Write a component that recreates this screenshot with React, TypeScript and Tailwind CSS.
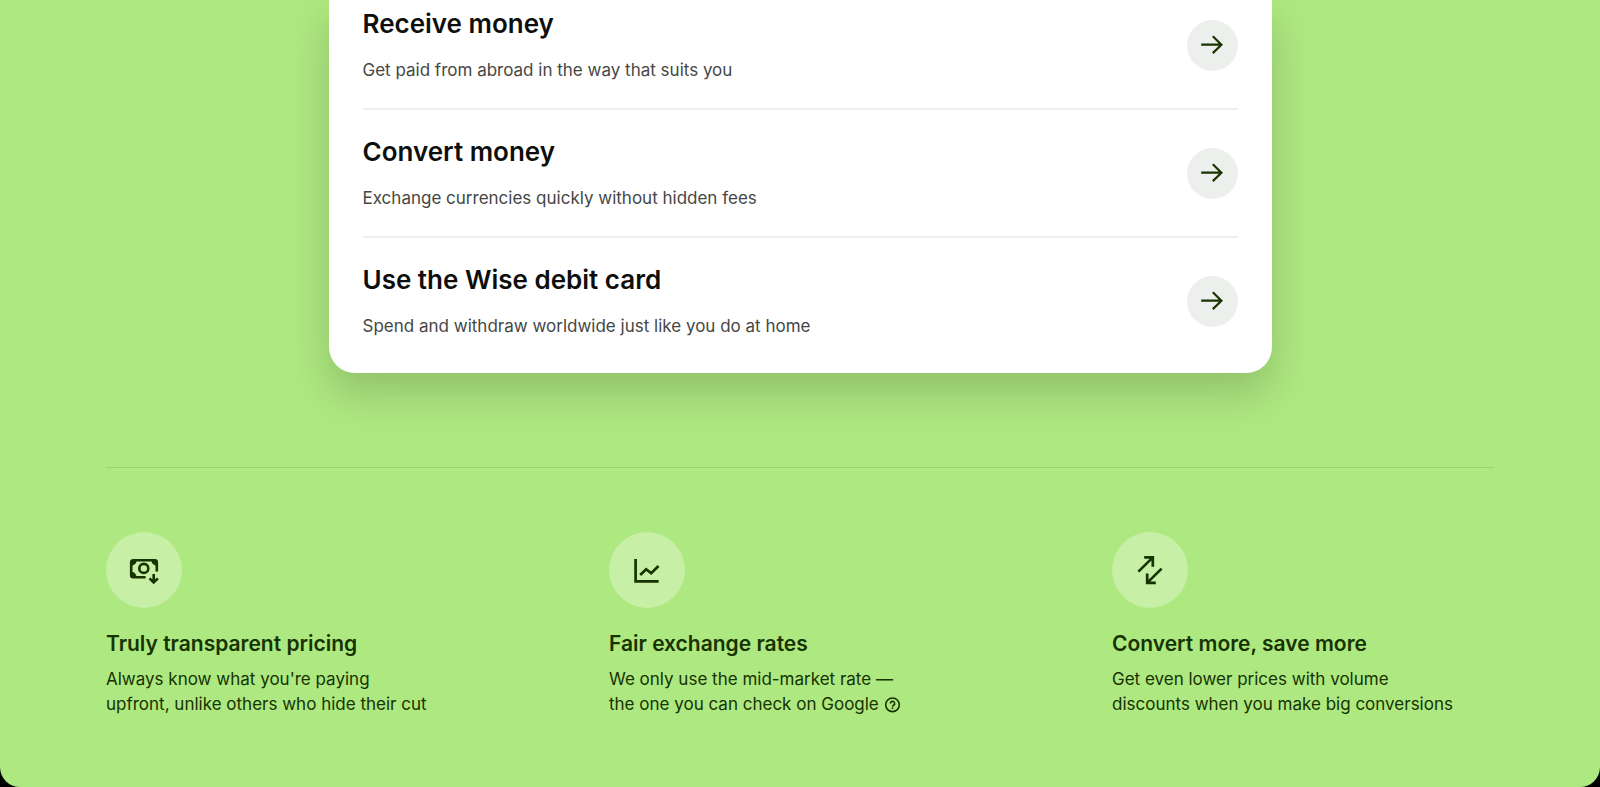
import type { ReactNode } from "react";

const actions = [
  {
    title: "Receive money",
    description: "Get paid from abroad in the way that suits you",
  },
  {
    title: "Convert money",
    description: "Exchange currencies quickly without hidden fees",
  },
  {
    title: "Use the Wise debit card",
    description: "Spend and withdraw worldwide just like you do at home",
  },
];

function ArrowIcon() {
  return (
    <svg width="24" height="24" viewBox="0 0 24 24" fill="none" stroke="currentColor" strokeWidth="2.2" aria-hidden="true">
      <path d="M1.2 11.7h20.4M12.8 3.3l8.6 8.4-8.6 8.4" />
    </svg>
  );
}

function MoneyIcon() {
  return (
    <svg width="32" height="32" viewBox="0 0 32 32" fill="none" stroke="currentColor" strokeWidth="2.6" aria-hidden="true">
      <path d="M17.6 23.3H5.2a2 2 0 0 1-2-2V8.2a2 2 0 0 1 2-2h21.6a2 2 0 0 1 2 2v9.2" />
      <path d="M4 11.4V7h4.4a4.4 4.4 0 0 1-4.4 4.4ZM28 11.4V7h-4.4a4.4 4.4 0 0 0 4.4 4.4ZM4 18.1v4.4h4.4a4.4 4.4 0 0 0-4.4-4.4Z" fill="currentColor" stroke="none" />
      <circle cx="15.8" cy="14.4" r="4.5" />
      <path d="M25.7 20v8.5M21.5 24.4l4.2 4.1 4.2-4.1" />
    </svg>
  );
}

function ChartIcon() {
  return (
    <svg width="32" height="32" viewBox="0 0 32 32" fill="none" stroke="currentColor" strokeWidth="2.7" aria-hidden="true">
      <path d="M4.6 5v22.4h23" />
      <path d="M9.2 21l6-5.8 5 4 7.3-7.2" />
    </svg>
  );
}

function ConvertIcon() {
  return (
    <svg width="32" height="32" viewBox="0 0 32 32" fill="none" stroke="currentColor" strokeWidth="2.7" aria-hidden="true">
      <path d="M4.4 17.6L18.6 3.6M10.2 3.4h8.6v9.4" />
      <path d="M27.6 14.6L13.4 28.6M21.8 28.8h-8.6v-9.4" />
    </svg>
  );
}

function HelpIcon() {
  return (
    <svg width="17" height="17" viewBox="0 0 16 16" fill="none" stroke="currentColor" strokeWidth="1.5" aria-hidden="true">
      <circle cx="8" cy="7.4" r="6.4" />
      <path d="M6 6.1a2 2 0 1 1 3 1.7c-.7.4-1 .7-1 1.3" />
      <path d="M8 9.8v1.5" />
    </svg>
  );
}

function ActionRow({ title, description }: { title: string; description: string }) {
  return (
    <li className="flex items-center justify-between border-b-2 border-[#eeeeee] py-[25px] first:pt-[7px] last:border-b-0 last:pb-[34px]">
      <div>
        <h2 className="text-[26px] leading-[34px] font-semibold text-[#0e0f0c]">{title}</h2>
        <p className="mt-4 text-[17px] leading-[26px] text-[#454745]">{description}</p>
      </div>
      <a
        href="#"
        aria-label={title}
        className="flex size-[51px] shrink-0 items-center justify-center rounded-full bg-[#edefec] text-[#163300]"
      >
        <ArrowIcon />
      </a>
    </li>
  );
}

interface FeatureProps {
  icon: ReactNode;
  title: string;
  children: ReactNode;
}

function Feature({ icon, title, children }: FeatureProps) {
  return (
    <div>
      <div className="flex size-[76px] items-center justify-center rounded-full bg-[#c8efa6]">{icon}</div>
      <h3 className="mt-[22px] text-[21px] leading-7 font-semibold">{title}</h3>
      <p className="mt-[9px] text-[17px] leading-[25px] whitespace-nowrap">{children}</p>
    </div>
  );
}

export default function App() {
  return (
    <div className="bg-black font-['Inter',sans-serif]">
      <main className="rounded-b-[20px] bg-[#aee880] px-[106px] pb-[70px] text-[#163300]">
        {/* Action card */}
        <ul className="mx-auto max-w-[943px] rounded-b-[26px] bg-white px-[34px] shadow-[0_20px_40px_rgba(0,0,0,0.17)]">
          {actions.map((action) => (
            <ActionRow key={action.title} {...action} />
          ))}
        </ul>

        {/* Features */}
        <section className="mt-[94px] grid grid-cols-3 gap-[121px] border-t border-[#9cd072] pt-16">
          <Feature icon={<MoneyIcon />} title="Truly transparent pricing">
            Always know what you're paying
            <br />
            upfront, unlike others who hide their cut
          </Feature>
          <Feature icon={<ChartIcon />} title="Fair exchange rates">
            We only use the mid-market rate —
            <br />
            the one you can check on Google{" "}
            <button type="button" aria-label="More about the mid-market rate" className="inline-flex align-text-bottom">
              <HelpIcon />
            </button>
          </Feature>
          <Feature icon={<ConvertIcon />} title="Convert more, save more">
            Get even lower prices with volume
            <br />
            discounts when you make big conversions
          </Feature>
        </section>
      </main>
    </div>
  );
}
